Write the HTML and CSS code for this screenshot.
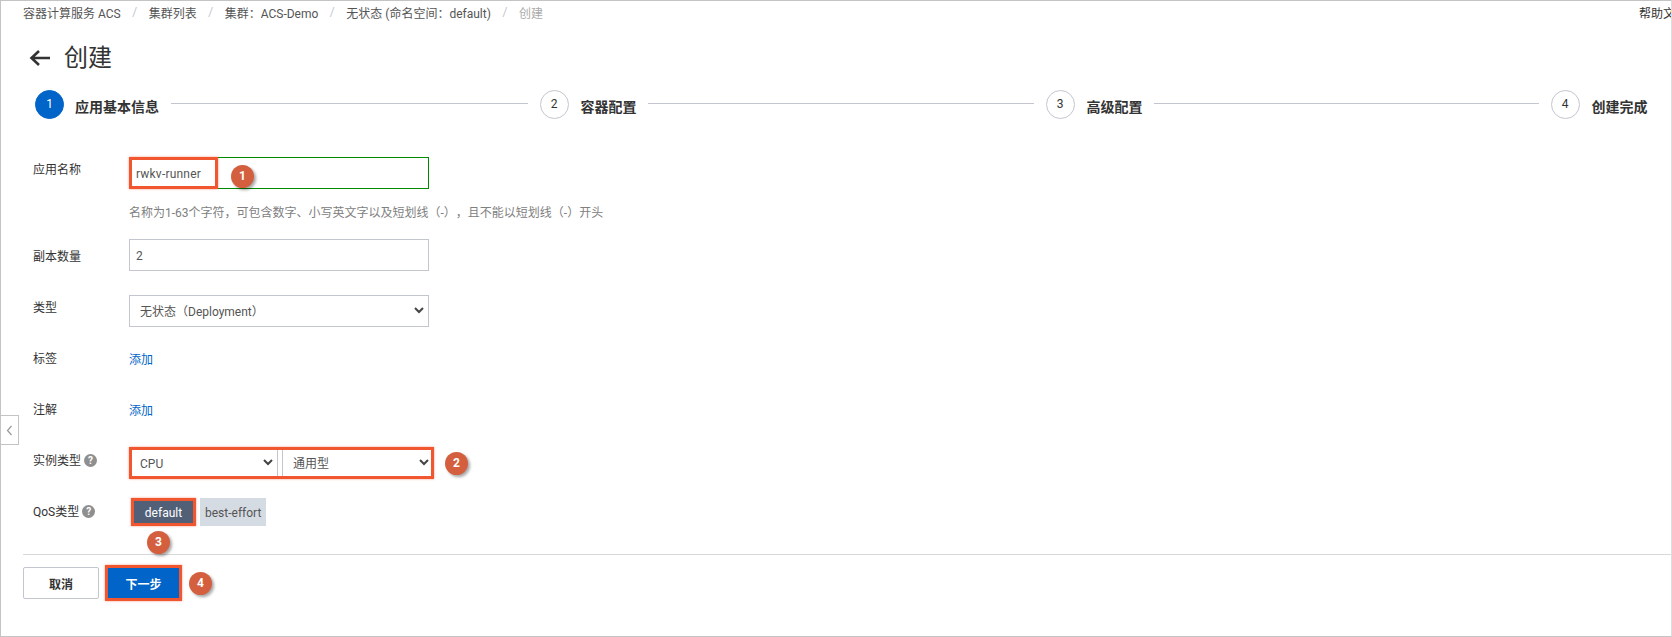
FILE: index.html
```html
<!DOCTYPE html>
<html lang="en">
<head>
    <meta charset="UTF-8">
    <title>创建</title>
    <link rel="stylesheet" href="styles.css">
</head>
<body>
    <div class="page">
        <div class="breadcrumb">
            <span class="crumb">容器计算服务 ACS</span><span class="crumb-sep">/</span>
            <span class="crumb">集群列表</span><span class="crumb-sep">/</span>
            <span class="crumb">集群：ACS-Demo</span><span class="crumb-sep">/</span>
            <span class="crumb">无状态 (命名空间：default)</span><span class="crumb-sep">/</span>
            <span class="crumb crumb-current">创建</span>
            <span class="help-link">帮助文档</span>
        </div>

        <div class="title-row">
            <svg class="back-icon" width="22" height="18" viewBox="0 0 22 18"><path d="M21 9H3M10 2 2.500 9l7.500 7" fill="none" stroke="#333" stroke-width="2.600"/></svg>
            <h1 class="title">创建</h1>
        </div>

        <div class="steps">
            <div class="step"><span class="step-num step-active">1</span><span class="step-label">应用基本信息</span><span class="step-line"></span></div>
            <div class="step"><span class="step-num">2</span><span class="step-label">容器配置</span><span class="step-line"></span></div>
            <div class="step"><span class="step-num">3</span><span class="step-label">高级配置</span><span class="step-line"></span></div>
            <div class="step"><span class="step-num">4</span><span class="step-label">创建完成</span></div>
        </div>

        <div class="form">
            <div class="form-row">
                <div class="form-label label-name">应用名称</div>
                <div class="form-control">
                    <div class="input-wrap">
                        <input class="input input-ok" type="text" value="rwkv-runner">
                        <span class="name-mark"></span>
                        <span class="badge badge-name">1</span>
                    </div>
                    <div class="hint">名称为1-63个字符，可包含数字、小写英文字以及短划线（-），且不能以短划线（-）开头</div>
                </div>
            </div>
            <div class="form-row row-replicas">
                <div class="form-label label-mid">副本数量</div>
                <div class="form-control"><input class="input" type="text" value="2"></div>
            </div>
            <div class="form-row row-type">
                <div class="form-label label-name">类型</div>
                <div class="form-control">
                    <div class="select-wrap select-full">
                        <select class="select"><option>无状态（Deployment）</option></select>
                        <svg class="chevron" width="10" height="7" viewBox="0 0 10 7"><path d="M1 1l4 4 4-4" fill="none" stroke="#444" stroke-width="2"/></svg>
                    </div>
                </div>
            </div>
            <div class="form-row row-labels">
                <div class="form-label label-top">标签</div>
                <div class="form-control"><a class="link">添加</a></div>
            </div>
            <div class="form-row row-notes">
                <div class="form-label label-top">注解</div>
                <div class="form-control"><a class="link">添加</a></div>
            </div>
            <div class="form-row row-instance">
                <div class="form-label label-help">实例类型<span class="help-icon">?</span></div>
                <div class="form-control control-inline">
                    <div class="select-group">
                        <div class="select-wrap select-cpu">
                            <select class="select"><option>CPU</option></select>
                            <svg class="chevron" width="10" height="7" viewBox="0 0 10 7"><path d="M1 1l4 4 4-4" fill="none" stroke="#444" stroke-width="2"/></svg>
                        </div>
                        <div class="select-wrap select-kind">
                            <select class="select"><option>通用型</option></select>
                            <svg class="chevron" width="10" height="7" viewBox="0 0 10 7"><path d="M1 1l4 4 4-4" fill="none" stroke="#444" stroke-width="2"/></svg>
                        </div>
                    </div>
                    <span class="badge badge-inline">2</span>
                </div>
            </div>
            <div class="form-row row-qos">
                <div class="form-label label-help">QoS类型<span class="help-icon">?</span></div>
                <div class="form-control control-qos">
                    <span class="tag tag-on">default</span>
                    <span class="tag">best-effort</span>
                    <span class="badge badge-qos">3</span>
                </div>
            </div>
        </div>

        <div class="divider"></div>

        <div class="footer">
            <button class="btn">取消</button>
            <button class="btn btn-primary">下一步</button>
            <span class="badge badge-next">4</span>
        </div>

        <div class="side-toggle">
            <svg width="7" height="11" viewBox="0 0 7 11"><path d="M5.500 1 1.500 5.500l4 4.500" fill="none" stroke="#999" stroke-width="1.200"/></svg>
        </div>
    </div>
</body>
</html>
```
FILE: styles.css
```css
* {
    box-sizing: border-box;
}
body {
    margin: 0;
    background-color: #fff;
    font-family: Roboto, "Noto Sans CJK SC", sans-serif;
    font-size: 12px;
    color: #333;
    text-spacing-trim: space-all;
}
.page {
    position: relative;
    width: 1672px;
    height: 637px;
    border: 1px solid #c4c4c4;
    border-right-color: #ddd;
    overflow: hidden;
}
.breadcrumb {
    display: flex;
    align-items: center;
    height: 22px;
    padding-left: 22px;
    color: #555;
    white-space: nowrap;
}
.crumb-sep {
    width: 28px;
    text-align: center;
    color: #c4c6cf;
}
.crumb-current {
    color: #aaa;
}
.help-link {
    margin-left: auto;
    margin-right: -16px;
    color: #333;
}
.title-row {
    display: flex;
    align-items: center;
    height: 32px;
    margin-top: 19px;
    padding-left: 28px;
}
.back-icon {
    margin-right: 13px;
}
.title {
    margin: 0;
    font-size: 24px;
    font-weight: 400;
    line-height: 32px;
    color: #333;
}
.steps {
    display: grid;
    grid-template-columns: 504.500px 506px 505px auto;
    margin-top: 16px;
    padding-left: 34px;
}
.step {
    display: flex;
    align-items: center;
    height: 29px;
    padding-right: 12px;
}
.step-num {
    flex: none;
    width: 29px;
    height: 29px;
    margin-right: 11px;
    border: 1px solid #c4c6cf;
    border-radius: 50%;
    line-height: 27px;
    text-align: center;
    color: #333;
}
.step + .step .step-num {
    margin-right: 12px;
}
.step-active {
    background-color: #0064c8;
    border-color: #0064c8;
    color: #fff;
}
.step-label {
    flex: none;
    margin-right: 12px;
    padding-top: 3px;
    font-size: 14px;
    font-weight: 700;
    color: #333;
}
.step + .step .step-label {
    margin-right: 11px;
}
.step-line {
    flex: 1;
    height: 1px;
    margin-top: -2px;
    background-color: #c4c6cf;
}
.form {
    margin-top: 38px;
    padding-left: 32px;
}
.form-row {
    display: flex;
}
.form-label {
    width: 96px;
    flex: none;
    line-height: 16px;
    color: #333;
}
.label-name {
    padding-top: 5px;
}
.label-mid {
    padding-top: 10px;
}
.label-top {
    padding-top: 2px;
}
.label-help {
    padding-top: 6px;
}
.input-wrap {
    position: relative;
    width: 300px;
}
.input {
    display: block;
    width: 300px;
    height: 32px;
    padding: 2px 6px 0;
    border: 1px solid #c4c6cf;
    border-radius: 0;
    outline: none;
    font: inherit;
    letter-spacing: 0.2px;
    color: #555;
}
.input-ok {
    border-color: #008a00;
}
.name-mark {
    position: absolute;
    left: 0;
    top: 0;
    width: 89px;
    height: 32px;
    border: 3px solid #f0562f;
    box-shadow: 0 0 2px rgba(240, 86, 47, 0.6);
}
.hint {
    margin-top: 16px;
    line-height: 16px;
    color: #808080;
    white-space: nowrap;
}
.row-replicas {
    margin-top: 18px;
}
.row-type {
    margin-top: 24px;
}
.row-labels {
    margin-top: 22px;
}
.row-notes {
    margin-top: 32px;
}
.row-instance {
    margin-top: 28px;
}
.row-qos {
    margin-top: 19px;
}
.select-wrap {
    position: relative;
}
.select-full {
    width: 300px;
}
.select {
    display: block;
    width: 100%;
    height: 32px;
    padding: 2px 24px 0 10px;
    border: 1px solid #c4c6cf;
    border-radius: 0;
    background-color: #fff;
    font: inherit;
    color: #555;
    appearance: none;
}
.chevron {
    position: absolute;
    right: 5px;
    top: 12px;
    pointer-events: none;
}
.control-inline {
    display: flex;
    align-items: center;
}
.select-group {
    position: relative;
    display: flex;
    gap: 4px;
    width: 305px;
    height: 32px;
}
.select-group::after {
    content: "";
    position: absolute;
    inset: 0;
    border: 3px solid #f0562f;
    box-shadow: 0 0 2px rgba(240, 86, 47, 0.6);
    pointer-events: none;
}
.select-cpu {
    width: 149px;
}
.select-kind {
    flex: 1;
}
.link {
    display: block;
    padding-top: 3px;
    line-height: 16px;
    color: #0064c8;
}
.help-icon {
    display: inline-block;
    width: 13px;
    height: 13px;
    margin-left: 3px;
    border-radius: 50%;
    background-color: #8f8f8f;
    color: #fff;
    font-size: 10px;
    font-weight: 700;
    line-height: 13px;
    text-align: center;
    vertical-align: 1px;
}
.control-qos {
    position: relative;
    display: flex;
    gap: 4px;
    padding-left: 2px;
}
.tag {
    height: 28px;
    padding: 0 5px;
    background-color: #d5dbe3;
    line-height: 30px;
    color: #555;
}
.tag-on {
    width: 65px;
    padding: 0;
    background-color: #526077;
    color: #fff;
    text-align: center;
    outline: 3px solid #f0562f;
    outline-offset: -3px;
    box-shadow: 0 0 2px rgba(240, 86, 47, 0.6);
}
.badge {
    display: block;
    flex: none;
    width: 23px;
    height: 23px;
    border-radius: 50%;
    background-color: #d45f3e;
    box-shadow: 2px 2px 3px rgba(0, 0, 0, 0.35);
    color: #fff;
    font-size: 12px;
    font-weight: 700;
    line-height: 23px;
    text-align: center;
}
.badge-name {
    position: absolute;
    left: 102px;
    top: 8px;
}
.badge-inline {
    margin-left: 11px;
}
.badge-qos {
    position: absolute;
    left: 18px;
    top: 33px;
}
.divider {
    height: 1px;
    margin: 28px 0 0 22px;
    background-color: #d9d9d9;
}
.footer {
    display: flex;
    align-items: center;
    margin-top: 10px;
    padding-left: 22px;
}
.btn {
    width: 76px;
    height: 32px;
    border: 1px solid #c4c6cf;
    border-radius: 2px;
    background-color: #fff;
    font: inherit;
    font-weight: 700;
    color: #333;
}
.btn-primary {
    width: 77px;
    height: 36px;
    margin-left: 6px;
    border: 3px solid #f0562f;
    border-radius: 0;
    background-color: #0064c8;
    box-shadow: 0 0 2px rgba(240, 86, 47, 0.6);
    color: #fff;
}
.footer .badge-next {
    margin-left: 7px;
}
.side-toggle {
    position: absolute;
    left: -1px;
    top: 414px;
    display: flex;
    align-items: center;
    justify-content: center;
    width: 19px;
    height: 30px;
    border: 1px solid #c4c4c4;
    background-color: #fff;
}
```
